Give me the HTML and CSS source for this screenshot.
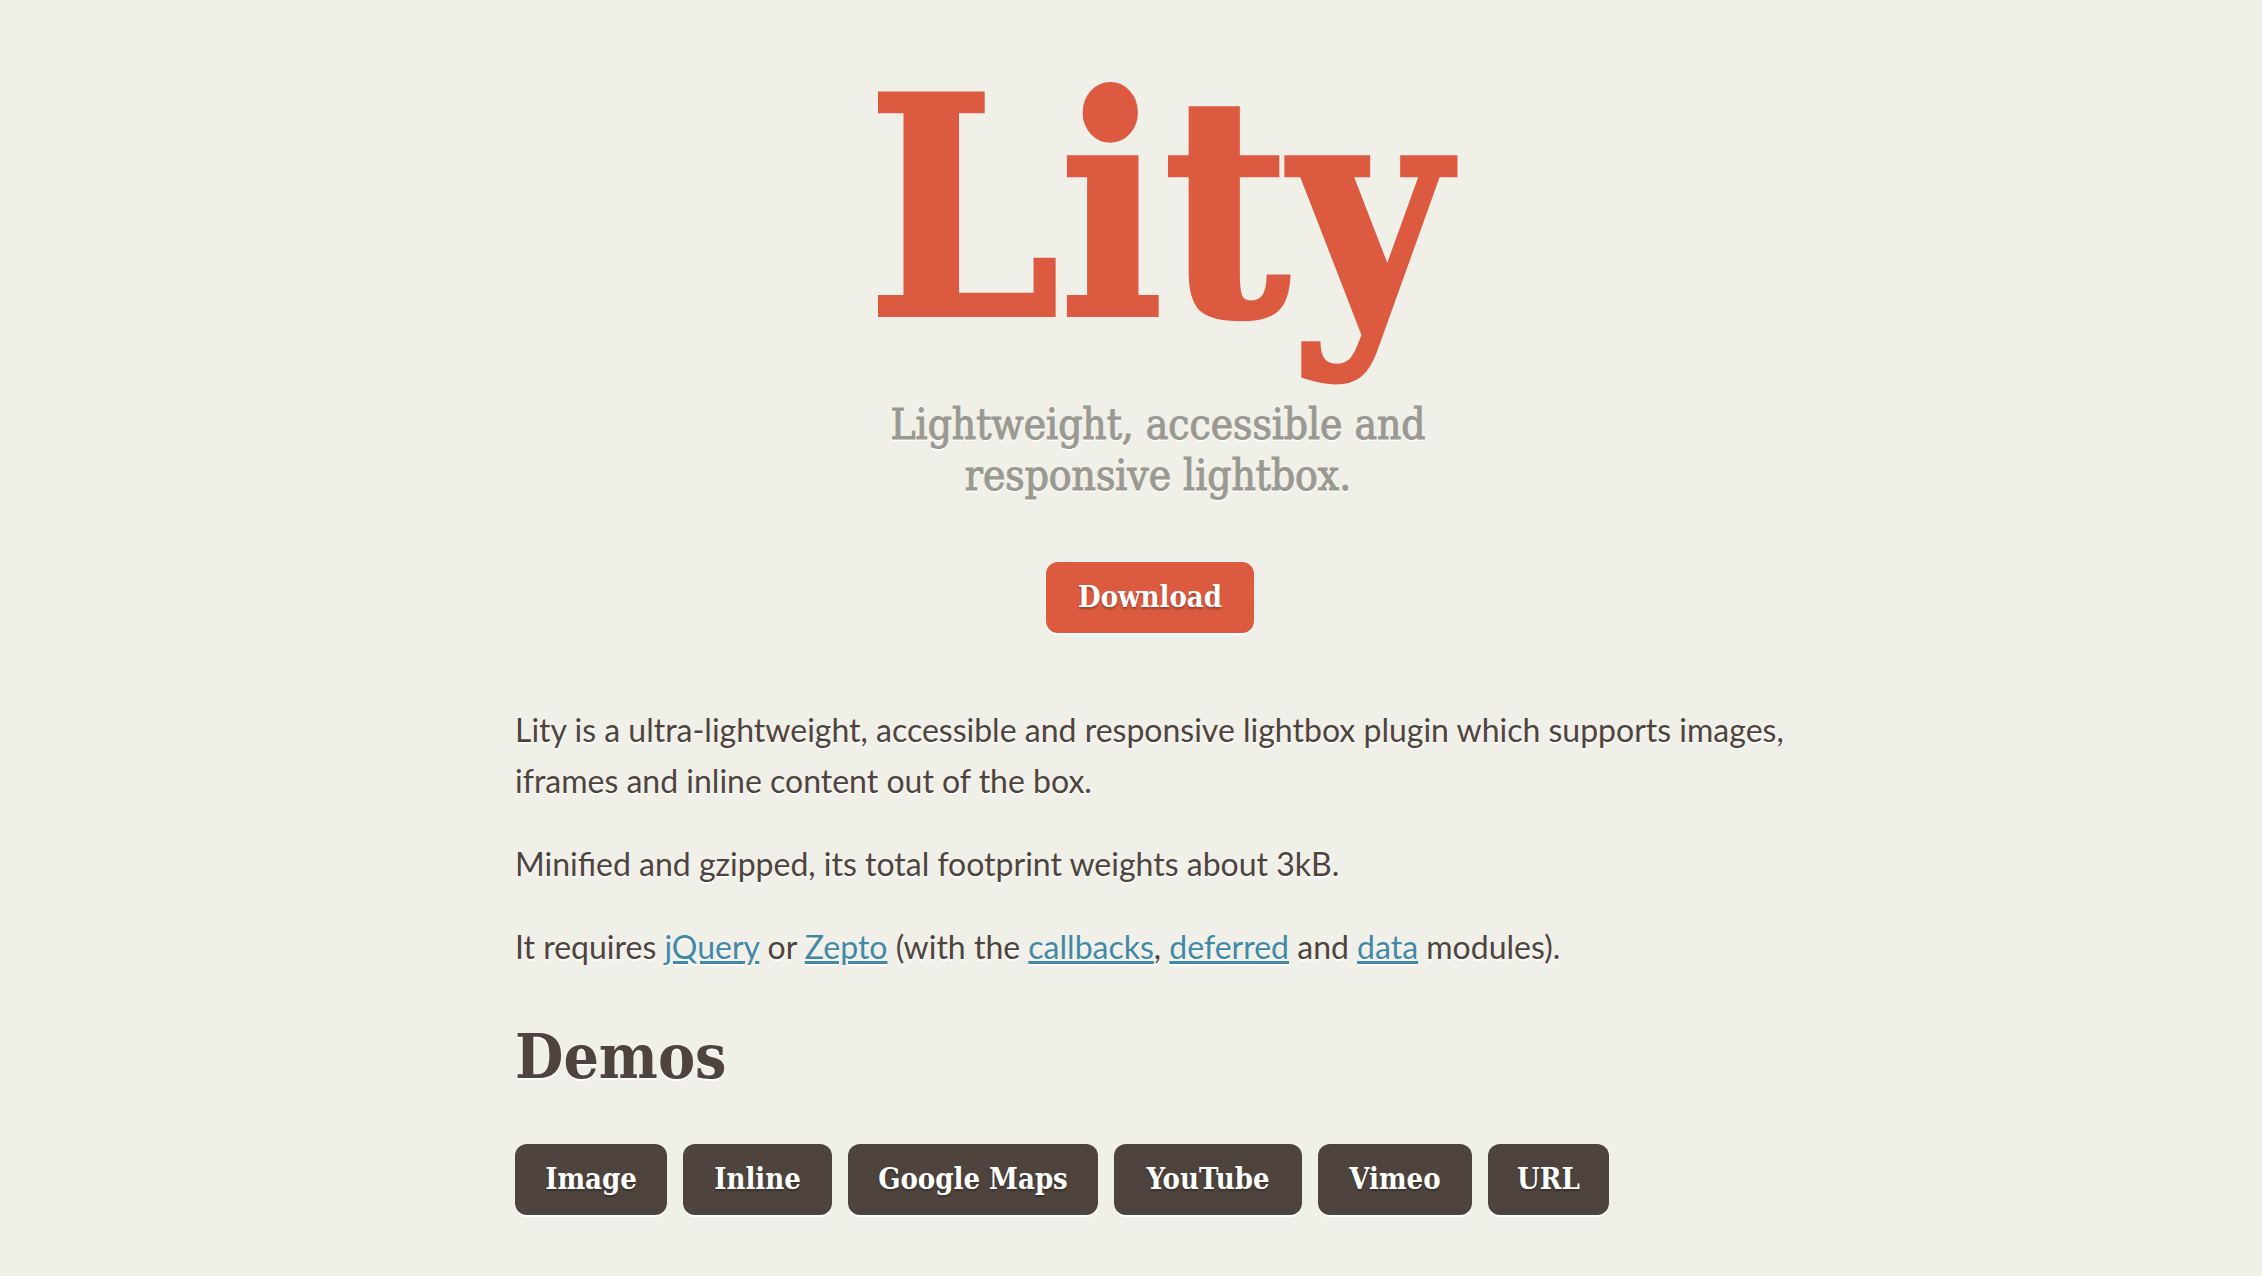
FILE: index.html
```html
<!DOCTYPE html>
<html lang="en">
<head>
<meta charset="utf-8">
<meta name="viewport" content="width=device-width, initial-scale=1">
<title>Lity</title>
<link rel="stylesheet" href="styles.css">
</head>
<body>
<div class="page">
  <header class="hero">
    <h1 class="brand">Lity</h1>
    <p class="tagline">Lightweight, accessible and<br>responsive lightbox.</p>
    <button type="button" class="button button-primary">Download</button>
  </header>
  <main>
    <section class="intro">
      <p>Lity is a ultra-lightweight, accessible and responsive lightbox plugin which supports images, iframes and inline content out of the box.</p>
      <p>Minified and gzipped, its total footprint weights about 3kB.</p>
      <p>It requires <a href="#jquery">jQuery</a> or <a href="#zepto">Zepto</a> (with the <a href="#callbacks">callbacks</a>, <a href="#deferred">deferred</a> and <a href="#data">data</a> modules).</p>
    </section>
    <section class="demos">
      <h2 class="heading">Demos</h2>
      <div class="demo-list">
        <button type="button" class="button">Image</button>
        <button type="button" class="button">Inline</button>
        <button type="button" class="button">Google Maps</button>
        <button type="button" class="button">YouTube</button>
        <button type="button" class="button">Vimeo</button>
        <button type="button" class="button">URL</button>
      </div>
    </section>
  </main>
</div>
</body>
</html>
```
FILE: styles.css
```css
* {
  box-sizing: border-box;
}

body {
  margin: 0;
  background: #f0efe8;
  color: #4e443d;
  font-family: Lato, sans-serif;
  font-size: 32px;
  line-height: 51px;
  text-shadow: 0 2px 0 #fff;
}

h1, h2, p {
  margin: 0;
}

.page {
  max-width: 1340px;
  margin: 0 auto;
  padding: 57px 0 60px 54px;
}

.hero {
  display: flex;
  flex-direction: column;
  align-items: center;
  text-align: center;
}

.brand,
.tagline,
.heading,
.button {
  font-family: "DejaVu Serif Condensed", "DejaVu Serif", serif;
}

.brand {
  color: #dc5a40;
  font-size: 304px;
  line-height: 304px;
  font-weight: 700;
  -webkit-text-stroke: 4px #dc5a40;
}

.tagline {
  margin-top: 38px;
  color: #9a9991;
  font-size: 42px;
  -webkit-text-stroke: 1px #9a9991;
}

.button {
  padding: 0;
  border: 0;
  border-radius: 12px;
  background: #4e443d;
  box-shadow: 0 2px 0 #fff;
  color: #fff;
  font-size: 29px;
  line-height: 71px;
  font-weight: 700;
  text-shadow: 0 2px 2px rgba(0, 0, 0, 0.3);
  white-space: nowrap;
  cursor: pointer;
}

.button-primary {
  min-width: 208px;
  margin: 61px 16px 0 0;
  background: #dc5a40;
}

.intro {
  display: flex;
  flex-direction: column;
  gap: 32px;
  margin-top: 71px;
}

.intro a {
  color: #4189a6;
  text-decoration-thickness: 3px;
}

.heading {
  margin-top: 54px;
  font-size: 62px;
  line-height: 62px;
}

.demo-list {
  display: grid;
  grid-template-columns: 152px 149px 250px 188px 154px 121px;
  gap: 16px;
  margin-top: 56px;
}
```
